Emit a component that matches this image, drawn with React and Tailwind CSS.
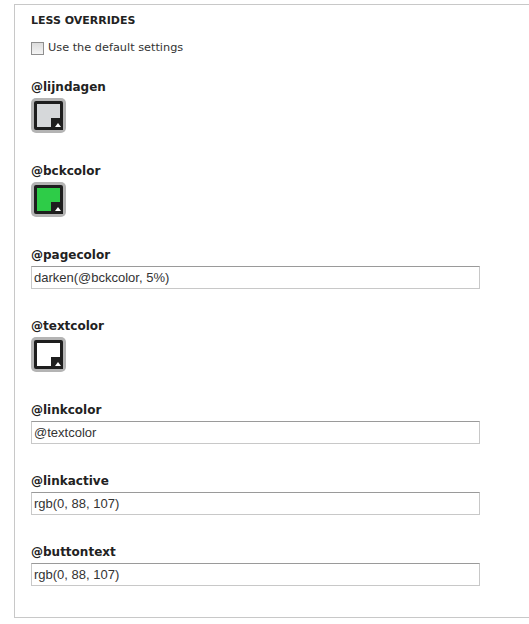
const fields = [
  { name: "@lijndagen", type: "color", value: "#d6d8da" },
  { name: "@bckcolor", type: "color", value: "#2ecc48" },
  { name: "@pagecolor", type: "text", value: "darken(@bckcolor, 5%)" },
  { name: "@textcolor", type: "color", value: "#ffffff" },
  { name: "@linkcolor", type: "text", value: "@textcolor" },
  { name: "@linkactive", type: "text", value: "rgb(0, 88, 107)" },
  { name: "@buttontext", type: "text", value: "rgb(0, 88, 107)" },
];

function Swatch({ color }) {
  return (
    <div className="mt-[1px] w-[35px] h-[35px] rounded-[5px] bg-[#b4b4b4] p-[3px]">
      <div className="relative w-full h-full rounded-[2px] bg-[#1e1e1e] p-[3px]">
        <div className="w-full h-full" style={{ backgroundColor: color }} />
        <div className="absolute right-0 bottom-0 w-[12px] h-[12px] bg-[#1e1e1e] flex items-center justify-center">
          <svg width="6" height="4" viewBox="0 0 6 4" className="mt-[2px] ml-[1px]">
            <path d="M0 4 L3 0 L6 4 Z" fill="#ffffff" />
          </svg>
        </div>
      </div>
    </div>
  );
}

function Field({ field }) {
  const isColor = field.type === "color";
  return (
    <div className={isColor ? "mb-[30px]" : "mb-[29px]"}>
      <div className="h-[16px] leading-[16px] mb-[3px] text-[12px] font-bold text-[#222] font-['DejaVu_Sans',sans-serif]">
        {field.name}
      </div>
      {isColor ? (
        <Swatch color={field.value} />
      ) : (
        <input
          type="text"
          defaultValue={field.value}
          className="block w-[449px] h-[23px] px-[2px] border border-[#c8c8c8] border-t-[#9a9a9a] bg-white text-[13px] text-[#333] font-['Liberation_Sans',Arial,sans-serif] outline-none"
        />
      )}
    </div>
  );
}

export default function App() {
  return (
    <div className="w-[529px] h-[624px] overflow-hidden bg-white pt-[4px] pl-[14px]">
      <div className="w-[600px] h-[614px] border-l border-t border-b border-[#c8c8c8] pl-[16px] pt-[8px] font-['DejaVu_Sans',sans-serif]">
        <div className="h-[16px] leading-[16px] text-[11px] font-bold text-[#222] uppercase">
          Less overrides
        </div>
        <label className="mt-[11px] flex items-center h-[16px] text-[11.3px] text-[#333]">
          <span className="w-[13px] h-[13px] border border-[#8f8f8f] bg-gradient-to-b from-[#dcdcdc] to-[#f4f4f4] mr-[4px]" />
          Use the default settings
        </label>
        <div className="mt-[23px]">
          {fields.map((f) => (
            <Field key={f.name} field={f} />
          ))}
        </div>
      </div>
    </div>
  );
}
